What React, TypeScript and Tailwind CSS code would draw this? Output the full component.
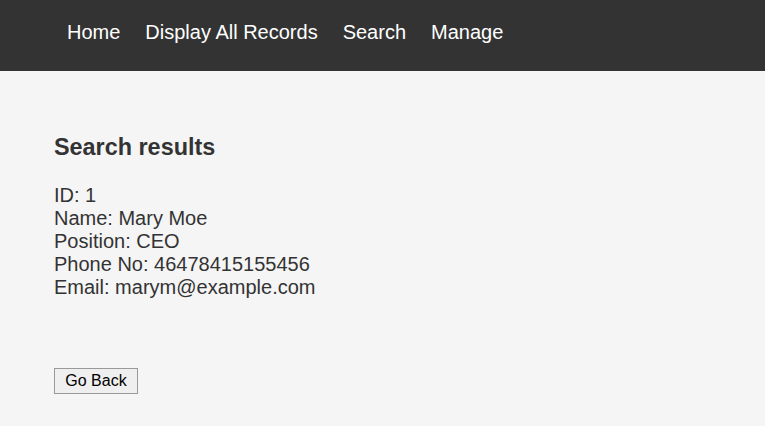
export default function App() {
  const links = ['Home', 'Display All Records', 'Search', 'Manage']
  return (
    <div className="min-h-[426px] bg-[#f5f5f5] font-['Liberation_Sans',Arial,sans-serif] text-[#333]">
      <nav className="flex h-[71px] items-start gap-[25px] bg-[#333] pl-[67px] pt-[21px]">
        {links.map((link) => (
          <a className="text-[20px] leading-[23px] text-white no-underline" href="#" key={link}>
            {link}
          </a>
        ))}
      </nav>
      <main className="pl-[54px] pt-[63px]">
        <h3 className="text-[23.4px] font-bold leading-[27px]">Search results</h3>
        <div className="mt-[23px] text-[20px] leading-[23px]">
          <p>ID: 1</p>
          <p>Name: Mary Moe</p>
          <p>Position: CEO</p>
          <p>Phone No: 46478415155456</p>
          <p>Email: marym@example.com</p>
        </div>
        <button className="mt-[69px] h-[26px] w-[84px] border border-[#999] bg-[#efefef] text-[16px] leading-[18px] text-black">
          Go Back
        </button>
      </main>
    </div>
  )
}
